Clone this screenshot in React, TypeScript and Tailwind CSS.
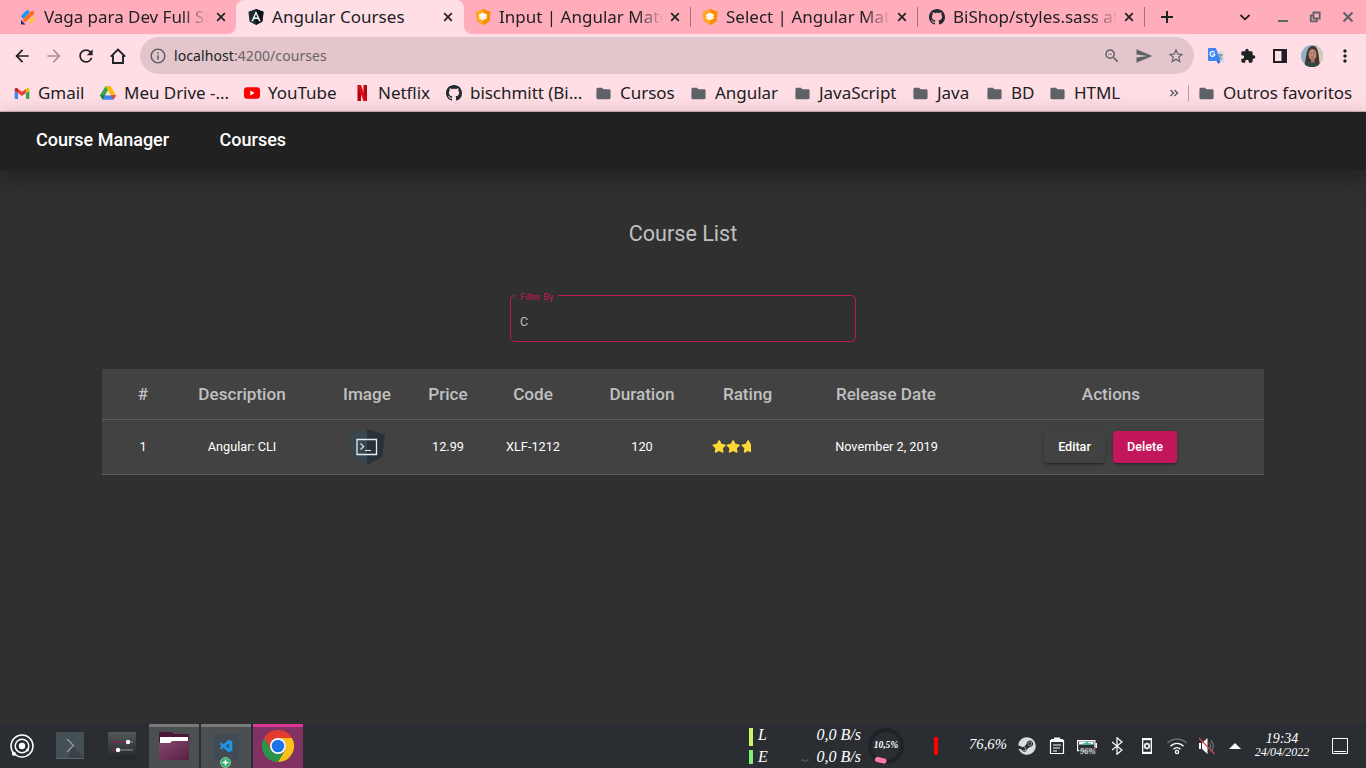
import React from "react";
import { FaSteam } from "react-icons/fa";
import { VscVscode } from "react-icons/vsc";
import {
  MdArrowBack,
  MdArrowForward,
  MdExtension,
  MdFolder,
  MdMoreVert,
  MdOutlineInfo,
  MdRefresh,
  MdSend,
  MdStarBorder,
  MdZoomOut,
} from "react-icons/md";

type IconProps = { className?: string };

const GithubIcon = ({ className }: IconProps) => (
  <svg viewBox="0 0 16 16" className={className} fill="currentColor">
    <path d="M8 0C3.58 0 0 3.58 0 8c0 3.54 2.29 6.53 5.47 7.59.4.07.55-.17.55-.38 0-.19-.01-.82-.01-1.49-2.01.37-2.53-.49-2.69-.94-.09-.23-.48-.94-.82-1.13-.28-.15-.68-.52-.01-.53.63-.01 1.08.58 1.23.82.72 1.21 1.87.87 2.33.66.07-.52.28-.87.51-1.07-1.78-.2-3.64-.89-3.64-3.95 0-.87.31-1.59.82-2.15-.08-.2-.36-1.02.08-2.12 0 0 .67-.21 2.2.82.64-.18 1.32-.27 2-.27s1.36.09 2 .27c1.53-1.04 2.2-.82 2.2-.82.44 1.1.16 1.92.08 2.12.51.56.82 1.27.82 2.15 0 3.07-1.87 3.75-3.65 3.95.29.25.54.73.54 1.48 0 1.07-.01 1.93-.01 2.2 0 .21.15.46.55.38A8.01 8.01 0 0 0 16 8c0-4.42-3.58-8-8-8Z" />
  </svg>
);

const CloseIcon = ({ className }: IconProps) => (
  <svg viewBox="0 0 14 14" className={className} fill="none" stroke="currentColor" strokeWidth="1.700">
    <path d="m3.200 3.200 7.600 7.600M10.800 3.200l-7.600 7.600" />
  </svg>
);

const JobIcon = () => (
  <svg viewBox="0 0 16 16" className="size-4 shrink-0">
    <path d="M7.600 3 3.200 7.400" stroke="#1597f5" strokeWidth="3.800" strokeLinecap="round" />
    <path d="M12.300 3.800 5 11" stroke="#ff6b1a" strokeWidth="3.800" strokeLinecap="round" />
    <path d="M13.200 9.500 10.500 12.600" stroke="#ffc33b" strokeWidth="3.400" strokeLinecap="round" />
    <path d="M1 11v4.500h4.500Z" fill="#2c2470" />
  </svg>
);

const MaterialIcon = () => (
  <svg viewBox="0 0 16 16" className="size-4 shrink-0">
    <path d="M8 0 15.500 2.700 14.300 12.500 8 16 1.700 12.500.5 2.700Z" fill="#ffa726" />
    <path d="M8 0 15.500 2.700 14.300 12.500 8 16Z" fill="#fb8c00" />
    <path d="M8 3.800 12 5.700v1l-.6.900.6.600v1L8 11.600 4 9.500v-1l.600-.9L4 6.700v-1Z" fill="#fff3dc" />
    <path d="M8 3.800 12 5.700 8 7.700 4 5.700Z" fill="#fff" />
  </svg>
);

const AngularIcon = () => (
  <svg viewBox="0 0 16 16" className="size-4 shrink-0">
    <path d="M8 0 15.600 2.700 14.400 12.400 8 16 1.600 12.400.4 2.700Z" fill="#1b2a33" />
    <path d="M8 0 15.600 2.700 14.400 12.400 8 16Z" fill="#0b1419" />
    <path d="M8 1.900 3.300 12.300h1.800l.9-2.300h4l.9 2.300h1.800Zm1.400 6.600H6.600L8 5.100Z" fill="#fff" />
  </svg>
);

const tabs = [
  { title: "Vaga para Dev Full Stack", icon: <JobIcon />, box: "w-[236px] pl-5", x: "ml-1.5", active: false, sep: false },
  { title: "Angular Courses", icon: <AngularIcon />, box: "w-[228px] pl-3", x: "ml-[5px]", active: true, sep: false },
  { title: "Input | Angular Material", icon: <MaterialIcon />, box: "w-[227px] pl-[11px]", x: "ml-[5px]", active: false, sep: true },
  { title: "Select | Angular Material", icon: <MaterialIcon />, box: "w-[227px] pl-[11px]", x: "ml-[5px]", active: false, sep: true },
  { title: "BiShop/styles.sass at main", icon: <GithubIcon className="size-4 shrink-0 text-[#24292f]" />, box: "w-[227px] pl-[11px]", x: "ml-[5px]", active: false, sep: true },
];

const TabStrip = () => (
  <div className="flex h-[34px] w-full bg-[#ffdfe5]">
    {tabs.map((t, i) => (
      <div
        key={t.title}
        className={`relative flex h-[34px] shrink-0 items-center bg-[#ffacbb] ${t.box} ${
          i === 0 ? "rounded-br-lg" : i === 2 ? "rounded-bl-lg" : ""
        }`}
      >
        {t.active && <div className="absolute inset-0 rounded-t-lg bg-[#ffdfe5]" />}
        <div className="relative flex items-center">
          {t.icon}
          <span
            className={`ml-2 h-6 w-[164px] overflow-hidden text-[17px] leading-6 whitespace-nowrap text-[#202124] ${
              t.active ? "tracking-[0.03px]" : "[mask-image:linear-gradient(to_right,#000_84%,transparent)]"
            } ${i === 0 ? "tracking-[-0.04px]" : ""}`}
          >
            {t.title}
          </span>
          <CloseIcon className={`size-[14px] shrink-0 text-[#202124] ${t.x}`} />
        </div>
        {t.sep && <span className="absolute top-[7px] right-0 h-5 w-px bg-[#a8727c]" />}
      </div>
    ))}
    <div className="flex flex-1 items-center bg-[#ffacbb] pl-[13px] text-[#202124]">
      <svg viewBox="0 0 18 18" className="size-[18px]" fill="none" stroke="currentColor" strokeWidth="2">
        <path d="M9 3v12M3 9h12" />
      </svg>
      <svg viewBox="0 0 12 12" className="ml-[63px] size-3" fill="none" stroke="currentColor" strokeWidth="1.800">
        <path d="M1.500 4 6 8.300 10.500 4" />
      </svg>
      <svg viewBox="0 0 12 12" className="ml-[26px] size-3" fill="none" stroke="#5f6368" strokeWidth="2">
        <path d="M1 10h10" />
      </svg>
      <svg viewBox="0 0 12 12" className="ml-5 size-3" fill="none" stroke="#5f6368" strokeWidth="1.800">
        <path d="M4.500 1.500h6.200v6H4.500ZM4 4.500H1.800v5.900h6V8.500" />
      </svg>
      <svg viewBox="0 0 12 12" className="ml-[21px] size-3" fill="none" stroke="#5f6368" strokeWidth="2.200">
        <path d="m1.500 1.500 9 9M10.500 1.500l-9 9" />
      </svg>
    </div>
  </div>
);

const TranslateIcon = () => (
  <svg viewBox="0 0 18 18" className="size-[18px]">
    <path d="M7 4h9.200c.5 0 .8.300.8.800v10.400c0 .5-.3.800-.8.800H12Z" fill="#d8dde3" />
    <path d="M10.500 8h5M13 6.700V8m1.700 0c-.6 2-1.800 3.500-3.400 4.500M11.500 8.600c.8 1.600 2 2.800 3.800 3.800" stroke="#607d8b" strokeWidth="1" fill="none" />
    <path d="M1.800 1h7l4.800 13H1.800c-.5 0-.8-.3-.8-.8V1.800c0-.5.300-.8.800-.8Z" fill="#4285f4" />
    <path d="M9.500 14h4l-2 3.200Z" fill="#3367d6" />
    <path d="M8 7.200H5.600M7.600 5.500A2.500 2.500 0 1 0 8 7.200" stroke="#fff" strokeWidth="1.200" fill="none" />
  </svg>
);

const Avatar = () => (
  <svg viewBox="0 0 22 22" className="size-[22px]">
    <defs>
      <clipPath id="face">
        <circle cx="11" cy="11" r="11" />
      </clipPath>
    </defs>
    <g clipPath="url(#face)">
      <path d="M0 0h22v22H0Z" fill="#8fb3c4" />
      <path d="M15 2h7v18h-7Z" fill="#d3cbbb" />
      <path d="M3 22C6 14 4 2 11.500 1 19 1 17 13 19.500 22Z" fill="#46352f" />
      <path d="M2 22c1-4 4-5 9-5s6 2 7 5Z" fill="#33474a" />
      <ellipse cx="11.500" cy="9.500" rx="3.900" ry="5.500" fill="#bd8b74" />
      <path d="M10 14h3.500v3.500H10Z" fill="#a87560" />
      <path d="M9.300 8h1.500M12.300 8h1.500M10.200 12.300h2.800" stroke="#6f4038" strokeWidth=".8" />
    </g>
  </svg>
);

const Toolbar = () => (
  <div className="flex h-[41px] items-center pt-1 pb-0.5 pl-3 text-[#202124]">
    <MdArrowBack className="size-5" />
    <MdArrowForward className="ml-3 size-5 text-[#a8939a]" />
    <MdRefresh className="ml-3 size-5" />
    <svg viewBox="0 0 20 20" className="ml-3 size-5" fill="none" stroke="currentColor" strokeWidth="1.900">
      <path d="M5 9.500V17h10V9.500M2.800 10.700 10 3.500l7.200 7.200" />
    </svg>
    <div className="ml-3 flex h-[37px] w-[1054px] shrink-0 items-center rounded-full bg-[#e2c6cb] pl-[9px] text-[#5f6368]">
      <MdOutlineInfo className="size-[18px]" />
      <span className="ml-[7px] text-[14px] leading-5 tracking-[0.08px] text-[#6c6166]">
        <span className="text-[#202124]">localhost</span>:4200/courses
      </span>
      <div className="ml-auto flex items-center gap-[14px] pr-[9px]">
        <MdZoomOut className="size-[18px]" />
        <MdSend className="size-[18px]" />
        <MdStarBorder className="size-[18px]" />
      </div>
    </div>
    <div className="ml-[13px] flex items-center">
      <TranslateIcon />
      <MdExtension className="ml-[15px] size-4" />
      <svg viewBox="0 0 14 14" className="ml-[17px] size-[14px]">
        <path d="M1 1h12v12H1Z" fill="none" stroke="currentColor" strokeWidth="2" />
        <path d="M8.500 0H14v14H8.500Z" fill="currentColor" />
      </svg>
      <span className="ml-[14px]">
        <Avatar />
      </span>
      <MdMoreVert className="ml-3 size-5" />
    </div>
  </div>
);

const GmailIcon = () => (
  <svg viewBox="0 0 16 12" className="h-[11px] w-4 shrink-0">
    <path d="M1 12h2.700V5.500L0 2.700V11c0 .6.400 1 1 1Z" fill="#4285f4" />
    <path d="M12.300 12H15c.6 0 1-.4 1-1V2.700l-3.700 2.800Z" fill="#34a853" />
    <path d="M12.300 1v4.500L16 2.700V1.500C16 0 14.400-.5 13.300.300Z" fill="#fbbc04" />
    <path d="M3.700 5.500V1L8 4.200 12.300 1v4.500L8 8.700Z" fill="#ea4335" />
    <path d="M0 1.500v1.200l3.700 2.800V1l-1-.7C1.600-.5 0 0 0 1.500Z" fill="#c5221f" />
  </svg>
);

const DriveIcon = () => (
  <svg viewBox="0 0 16 16" className="size-4 shrink-0">
    <path d="M5.400 1.200h5.200L5.500 9.800 2.700 14.500 0 10.200Z" fill="#34a853" />
    <path d="M5.400 1.200h5.200L16 10.200h-5.300Z" fill="#fbbc04" />
    <path d="M5.400 10.200H16l-2.700 4.600H2.700Z" fill="#4285f4" />
    <path d="M8 5.500 10.700 10.200H5.300Z" fill="#ffdfe5" />
    <path d="M10.700 10.200H16l-2.300 4Z" fill="#ea4335" />
    <path d="M0 10.200h5.400l-2.700 4.600Z" fill="#188038" />
  </svg>
);

const YoutubeIcon = () => (
  <svg viewBox="0 0 16 16" className="size-4 shrink-0">
    <rect x="0" y="2.200" width="16" height="11.600" rx="3" fill="#f00" />
    <path d="m6.300 5.500 4.400 2.500-4.400 2.500Z" fill="#fff" />
  </svg>
);

const NetflixIcon = () => (
  <svg viewBox="0 0 16 16" className="size-4 shrink-0">
    <path d="M3.500 0H7v16l-3.500.4ZM9.500 0H13v16.400L9.500 16Z" fill="#b1060f" />
    <path d="M3.500 0H7l6 16.400L9.500 16Z" fill="#e50914" />
  </svg>
);

const FolderIcon = () => <MdFolder className="size-[17px] shrink-0 text-[#5f6368]" />;

const bookmarks = [
  { label: "Gmail", icon: <GmailIcon />, w: "w-[86px]" },
  { label: "Meu Drive -...", icon: <DriveIcon />, w: "w-[144px]" },
  { label: "YouTube", icon: <YoutubeIcon />, w: "w-[110px]" },
  { label: "Netflix", icon: <NetflixIcon />, w: "w-[92px]" },
  { label: "bischmitt (Bi...", icon: <GithubIcon className="size-4 shrink-0 text-[#24292f]" />, w: "w-[149px]" },
  { label: "Cursos", icon: <FolderIcon />, w: "w-[95px]" },
  { label: "Angular", icon: <FolderIcon />, w: "w-[104px]" },
  { label: "JavaScript", icon: <FolderIcon />, w: "w-[118px]" },
  { label: "Java", icon: <FolderIcon />, w: "w-[74px]" },
  { label: "BD", icon: <FolderIcon />, w: "w-[63px]" },
  { label: "HTML", icon: <FolderIcon />, w: "w-[120px]" },
];

const BookmarksBar = () => (
  <div className="flex h-[37px] items-center border-b border-[#cdb3b8] pl-[14px] text-[17px] leading-6 tracking-[-0.04px] whitespace-nowrap text-[#202124]">
    {bookmarks.map((b) => (
      <div key={b.label} className={`flex shrink-0 items-center gap-2 ${b.w}`}>
        {b.icon}
        <span>{b.label}</span>
      </div>
    ))}
    <svg viewBox="0 0 10 10" className="size-[10px] shrink-0" fill="none" stroke="#5f6368" strokeWidth="1.500">
      <path d="m1.500 2 3 3-3 3M5.500 2l3 3-3 3" />
    </svg>
    <span className="ml-[9px] h-4 w-px bg-[#b79ea4]" />
    <div className="ml-[9px] flex shrink-0 items-center gap-2">
      <FolderIcon />
      <span>Outros favoritos</span>
    </div>
  </div>
);

const CliLogo = () => (
  <svg viewBox="0 0 36 36" className="mx-auto size-9">
    <path d="M18 0 36 6l-2.800 22L18 36 2.800 28 0 6Z" fill="#37474f" />
    <path d="M18 0 36 6l-2.800 22L18 36Z" fill="#263238" />
    <path d="M8 10.500h19.500v15H8Z" fill="none" stroke="#e8eaec" strokeWidth="1.300" />
    <path d="m11.500 14.500 3.200 3-3.200 3M16 21.500h6" fill="none" stroke="#e8eaec" strokeWidth="1.100" />
  </svg>
);

const Star = () => (
  <svg viewBox="0 0 576 512" className="h-[13px] w-[14.300px] shrink-0" fill="#fdd835">
    <path d="M259.300 17.800 194 150.200 47.900 171.500c-26.200 3.800-36.700 36.100-17.700 54.600l105.700 103-25 145.500c-4.500 26.300 23.200 46 46.400 33.700L288 439.600l130.700 68.700c23.200 12.200 50.900-7.400 46.400-33.700l-25-145.500 105.700-103c19-18.500 8.500-50.800-17.700-54.600L382 150.200 316.700 17.800c-11.700-23.600-45.600-23.900-57.400 0Z" />
  </svg>
);

const headers = ["#", "Description", "Image", "Price", "Code", "Duration", "Rating", "Release Date", "Actions"];

const CourseTable = () => (
  <table className="w-[1162px] table-fixed border-separate border-spacing-0 bg-[#424242] text-center">
    <colgroup>
      <col className="w-[82px]" />
      <col className="w-[116px]" />
      <col className="w-[109px]" />
      <col className="w-[78px]" />
      <col className="w-[92px]" />
      <col className="w-[126px]" />
      <col className="w-[86px]" />
      <col className="w-[191px]" />
      <col className="w-[282px]" />
    </colgroup>
    <thead>
      <tr className="h-[51px] text-[17.100px] text-[#c0c0c0]">
        {headers.map((h) => (
          <th
            key={h}
            className={`border-b border-[#5e5e5e] p-0 pt-0.5 font-medium whitespace-nowrap ${
              h === "Image" ? "pl-[25px]" : h === "Actions" ? "pr-6" : h === "Rating" || h === "Release Date" ? "pr-px" : ""
            }`}
          >
            {h}
          </th>
        ))}
      </tr>
    </thead>
    <tbody>
      <tr className="h-[55px] text-[12.700px] whitespace-nowrap text-white *:border-b *:border-[#5e5e5e]">
        <td>1</td>
        <td>Angular: CLI</td>
        <td className="pl-[25px]">
          <CliLogo />
        </td>
        <td>12.99</td>
        <td>XLF-1212</td>
        <td>120</td>
        <td>
          <div className="mb-0.5 ml-[7px] flex w-[39px] overflow-hidden">
            <Star />
            <Star />
            <Star />
          </div>
        </td>
        <td>November 2, 2019</td>
        <td className="pr-[25px]">
          <div className="flex justify-center gap-2 text-[12.600px] font-medium">
            <button className="h-8 w-[61px] rounded bg-[#424242] shadow-[0_3px_1px_-2px_rgba(0,0,0,.2),0_2px_2px_rgba(0,0,0,.14),0_1px_5px_rgba(0,0,0,.12)]">
              Editar
            </button>
            <button className="h-8 w-16 rounded bg-[#c2185b] shadow-[0_3px_1px_-2px_rgba(0,0,0,.2),0_2px_2px_rgba(0,0,0,.14),0_1px_5px_rgba(0,0,0,.12)]">
              Delete
            </button>
          </div>
        </td>
      </tr>
    </tbody>
  </table>
);

const CoursePage = () => (
  <div className="flex h-[612px] flex-col bg-[#303030] font-['Roboto',sans-serif]">
    <nav className="flex h-[58px] shrink-0 gap-[50.500px] bg-[#212121] pt-4 pl-9 text-[18px] leading-6 font-medium text-white shadow-[0_8px_24px_rgba(0,0,0,.35)]">
      <span>Course Manager</span>
      <span>Courses</span>
    </nav>
    <main className="flex flex-col items-center">
      <h1 className="mt-12 h-8 text-[21.600px] leading-8 text-[#c0c0c0]">Course List</h1>
      <div className="relative mt-[45px] h-[47px] w-[346px] rounded-[5px] border border-[#c2185b] pt-[17px] pl-[9px] text-[12.500px] leading-[18px] text-[#c0c0c0]">
        <span className="absolute -top-[5px] left-1 bg-[#303030] pr-1 pl-[5px] text-[9.400px] leading-3 text-[#c2185b]">Filter By</span>
        C
      </div>
      <div className="mt-[27px]">
        <CourseTable />
      </div>
    </main>
  </div>
);

const Taskbar = () => (
  <footer className="flex h-11 items-center bg-[#2a2e32] text-white">
    <svg viewBox="0 0 24 24" className="ml-[10px] size-6 shrink-0" fill="none" stroke="#fff" strokeWidth="1.500">
      <circle cx="12" cy="12" r="11" />
      <circle cx="12" cy="12" r="6.800" />
      <circle cx="12" cy="12" r="3.200" fill="#fff" stroke="none" />
      <circle cx="3.800" cy="19.800" r="2" fill="#fff" stroke="none" />
      <circle cx="17.500" cy="16" r="1.400" fill="#fff" stroke="none" />
    </svg>
    <svg viewBox="0 0 28 27" className="mb-px ml-[22px] h-[27px] w-7 shrink-0">
      <path d="M0 0h28v27H0Z" fill="#455054" />
      <path d="m17 14 11 11v2H11Z" fill="#3a4347" />
      <path d="m11 7 6.500 6.500L11 20" fill="none" stroke="#93999c" strokeWidth="1.300" />
      <path d="M0 26.500h28" stroke="#5a666b" />
    </svg>
    <svg viewBox="0 0 28 27" className="mb-px ml-6 h-[27px] w-7 shrink-0">
      <defs>
        <linearGradient id="mixer" x2="0" y2="1">
          <stop stopColor="#55585a" />
          <stop offset="1" stopColor="#222628" />
        </linearGradient>
      </defs>
      <path d="M0 0h28v27H0Z" fill="url(#mixer)" />
      <path d="M10 18h15M20 10h5" stroke="#727678" strokeWidth="1.500" />
      <path d="M3.500 10H20M3.500 18H10" stroke="#7c2455" strokeWidth="1.600" />
      <circle cx="20" cy="10" r="2.200" fill="#fff" />
      <circle cx="10" cy="18" r="2.200" fill="#fff" />
    </svg>
    <div className="ml-[13px] flex h-11 w-[50px] shrink-0 items-center justify-center border-t-[3px] border-[#777b7e] bg-[#4b4f52]">
      <svg viewBox="0 0 30 28" className="mb-[3px] h-7 w-[30px]">
        <defs>
          <linearGradient id="folder" x2="1" y2="1">
            <stop stopColor="#87486f" />
            <stop offset="1" stopColor="#572044" />
          </linearGradient>
        </defs>
        <path d="M0 0h13l2 2h15v12H0Z" fill="#4b1736" />
        <path d="M1 5h28v7H1Z" fill="#fff" />
        <path d="M0 11h11l2-2h17v19H0Z" fill="url(#folder)" />
      </svg>
    </div>
    <div className="relative ml-0.5 flex h-11 w-[50px] shrink-0 items-center justify-center border-t-[3px] border-[#777b7e] bg-[#4b4f52]">
      <span className="mb-0.5 flex size-[26px] items-center justify-center bg-[#414b53]">
        <VscVscode className="size-[15px] text-[#2196e8]" stroke="currentColor" strokeWidth="0.4" />
      </span>
      <svg viewBox="0 0 10 10" className="absolute bottom-0 left-[19px] size-[11px]">
        <circle cx="5" cy="5" r="4.500" fill="#27ae60" stroke="#d4f3df" strokeWidth=".6" />
        <path d="M5 2.300v5.400M2.300 5h5.400" stroke="#fff" strokeWidth="1.300" />
      </svg>
    </div>
    <div className="ml-0.5 flex h-11 w-[50px] shrink-0 items-center justify-center border-t-[3px] border-[#db3596] bg-[#823163]">
      <svg viewBox="0 0 32 32" className="mb-[3px] size-8">
        <path d="M2.140 8A16 16 0 0 1 29.860 8H16a8 8 0 0 0-6.930 12Z" fill="#e33b2e" />
        <path d="M29.860 8A16 16 0 0 1 16 32l6.930-12A8 8 0 0 0 16 8Z" fill="#fbc116" />
        <path d="M16 32A16 16 0 0 1 2.140 8l6.930 12A8 8 0 0 0 22.930 20Z" fill="#2a9549" />
        <circle cx="16" cy="16" r="8" fill="#fff" />
        <circle cx="16" cy="16" r="6.300" fill="#1a73e8" />
      </svg>
    </div>

    <div className="ml-[446px] flex shrink-0 flex-col gap-1">
      <span className="h-[18px] w-1 bg-[#cdf36c]" />
      <span className="h-[14px] w-1 bg-[#7cf277]" />
    </div>
    <div className="ml-[5px] flex w-[103px] shrink-0 flex-col font-['Z003','URW_Chancery_L','Liberation_Serif',serif] text-[16px] leading-[22px] italic">
      <div className="flex justify-between">
        <span>L</span>
        <span>0,0 B/s</span>
      </div>
      <div className="flex items-center">
        <span>E</span>
        <svg viewBox="0 0 8 4" className="mt-2 ml-auto h-1 w-2" fill="none" stroke="#5b666b" strokeWidth="1">
          <path d="M0 1h2l2 2 2-2h2" />
        </svg>
        <span className="ml-2">0,0 B/s</span>
      </div>
    </div>
    <div className="relative ml-[7px] flex size-9 shrink-0 items-center justify-center pb-0.5 font-['Liberation_Serif',serif] text-[9.500px] font-bold italic">
      <svg viewBox="0 0 36 36" className="absolute inset-0 size-9" fill="none">
        <circle cx="18" cy="18" r="16" stroke="#202326" strokeWidth="4" />
        <path d="M16 33 9.500 31.500" stroke="#ff78b4" strokeWidth="5" strokeLinecap="round" />
      </svg>
      <span className="relative">10,5%</span>
    </div>
    <span className="ml-[30px] h-[18px] w-1 shrink-0 bg-[#f00]" />
    <span className="ml-[31px] w-[38px] shrink-0 pb-1 font-['Liberation_Serif',serif] text-[14.700px] leading-5 italic">76,6%</span>
    <div className="ml-[11px] flex w-[208px] shrink-0 items-center gap-3">
      <FaSteam className="size-[18px] shrink-0 text-[#dcdcdc]" />
      <svg viewBox="0 0 18 18" className="size-[18px] shrink-0" fill="none" stroke="#fcfcfc">
        <path d="M2.500 3v13.500h13V3" strokeWidth="1.200" />
        <path d="M3 2h3V.500h6V2h3v3H3Z" fill="#fcfcfc" stroke="none" />
        <path d="M5 8h8M5 11h7M5 14h4" strokeWidth="1.200" />
      </svg>
      <div className="relative -mx-px flex h-[18px] w-5 shrink-0 items-start">
        <svg viewBox="0 0 20 14" className="mt-0.5 h-[14px] w-5" fill="none">
          <path d="M.600 1.600h17.300v10H.600Z" stroke="#fcfcfc" strokeWidth="1.200" />
          <path d="M18.500 4H20v5h-1.500Z" fill="#fcfcfc" />
          <path d="M2 2.500h14.500v3H2Z" fill="#fcfcfc" />
          <path d="M6 5h8M8 5l3-2" stroke="#26b99a" strokeWidth="1.500" />
        </svg>
        <span className="absolute -bottom-px left-0.5 rounded bg-[#34383c]/80 px-px font-['Liberation_Serif',serif] text-[8.500px] leading-[9px] font-bold text-[#d5d7d8] italic">
          96%
        </span>
      </div>
      <svg viewBox="0 0 18 18" className="size-[18px] shrink-0" fill="none" stroke="#fcfcfc" strokeWidth="1.200">
        <path d="m4 5 10 8-5 4.300V.700L14 5 4 13" />
      </svg>
      <svg viewBox="0 0 18 18" className="size-[18px] shrink-0" fill="none">
        <path d="M4 1h10v16H4Z" fill="#fcfcfc" />
        <path d="M5.300 3.200h7.400v11.600H5.300Z" fill="#2a2e32" />
        <circle cx="9" cy="9" r="2.300" stroke="#fcfcfc" strokeWidth="1.500" />
        <path d="M9 5.200v7.600M5.500 9h7M6.500 6.500l5 5M11.500 6.500l-5 5" stroke="#fcfcfc" strokeWidth=".7" />
        <circle cx="9" cy="9" r="1.200" fill="#2a2e32" />
      </svg>
      <svg viewBox="0 0 20 18" className="-mx-px h-[18px] w-5 shrink-0" fill="none" strokeWidth="1.300">
        <path d="M.500 6c5-5.300 14-5.300 19 0" stroke="#74787b" />
        <path d="M3.500 9.300c3.500-4 9.500-4 13 0M6.500 12.300c2-2.300 5-2.300 7 0" stroke="#fcfcfc" />
        <circle cx="10" cy="15" r="1.600" stroke="#fcfcfc" />
      </svg>
      <svg viewBox="0 0 18 18" className="size-[18px] shrink-0" fill="none">
        <path d="M1 6h2v6H1ZM4 6l5.500-5v16L4 12Z" fill="#fcfcfc" />
        <path d="M11.500 6c1.500 2 1.500 4 0 6M13 3.500c3 3.500 3 7.500 0 11" stroke="#74787b" strokeWidth="1.200" />
        <path d="m1 1 15.500 16" stroke="#da4453" strokeWidth="1.200" />
      </svg>
    </div>
    <svg viewBox="0 0 12 6" className="ml-[3px] h-1.5 w-3 shrink-0" fill="#fcfcfc">
      <path d="m6 0 6 6H0Z" />
    </svg>
    <div className="ml-[11px] flex w-[60px] shrink-0 flex-col items-center pb-[3px] font-['Liberation_Serif',serif] italic">
      <span className="text-[14px] leading-[15px]">19:34</span>
      <span className="text-[12px] leading-[13px]">24/04/2022</span>
    </div>
    <svg viewBox="0 0 16 16" className="ml-5 size-4 shrink-0" fill="none" stroke="#fcfcfc">
      <path d="M.500.500h15v15H.500ZM2 13.500h12" />
    </svg>
  </footer>
);

export default function App() {
  return (
    <div className="flex h-[768px] w-[1366px] flex-col overflow-hidden bg-[#ffdfe5] font-['Noto_Sans',sans-serif]">
      <TabStrip />
      <Toolbar />
      <BookmarksBar />
      <CoursePage />
      <Taskbar />
    </div>
  );
}
